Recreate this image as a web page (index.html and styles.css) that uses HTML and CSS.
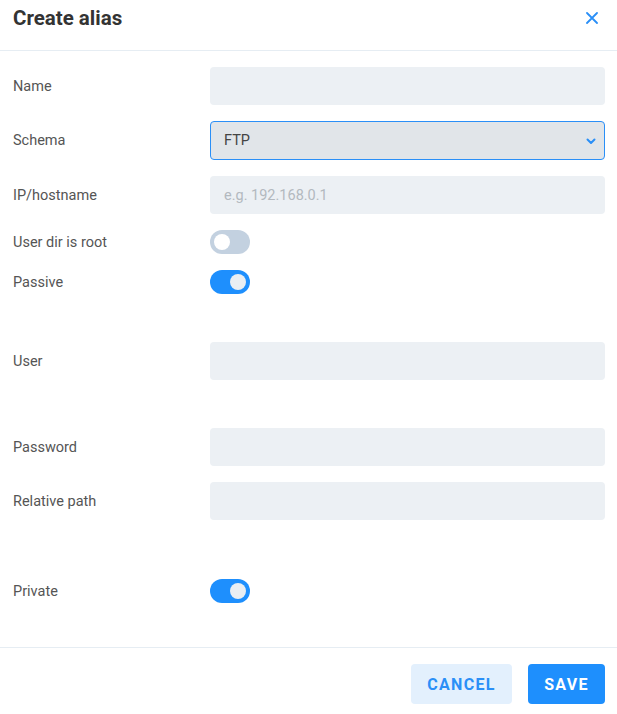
FILE: index.html
```html
<!DOCTYPE html>
<html lang="en">
<head>
  <meta charset="UTF-8">
  <meta name="viewport" content="width=device-width, initial-scale=1.0">
  <title>Create alias</title>
  <link rel="stylesheet" href="styles.css">
</head>
<body>
  <div class="dialog">
    <header class="dialog-head">
      <h1>Create alias</h1>
      <button class="close" aria-label="Close">
        <svg width="12" height="12" viewBox="0 0 12 12"><path d="M1 1L11 11M11 1L1 11" stroke="#2a8ff7" stroke-width="1.8" stroke-linecap="round"/></svg>
      </button>
    </header>

    <div class="dialog-body">
      <div class="row">
        <label>Name</label>
        <input class="field" type="text">
      </div>
      <div class="row">
        <label>Schema</label>
        <div class="select">
          <span>FTP</span>
          <svg width="10" height="7" viewBox="0 0 10 7"><path d="M1.5 1.5L5 5L8.5 1.5" fill="none" stroke="#2a8ff7" stroke-width="2" stroke-linecap="round" stroke-linejoin="round"/></svg>
        </div>
      </div>
      <div class="row">
        <label>IP/hostname</label>
        <input class="field" type="text" placeholder="e.g. 192.168.0.1">
      </div>
      <div class="row">
        <label>User dir is root</label>
        <span class="toggle"></span>
      </div>
      <div class="row">
        <label>Passive</label>
        <span class="toggle on"></span>
      </div>
      <div class="row spaced">
        <label>User</label>
        <input class="field" type="text">
      </div>
      <div class="row spaced">
        <label>Password</label>
        <input class="field" type="password">
      </div>
      <div class="row">
        <label>Relative path</label>
        <input class="field" type="text">
      </div>
      <div class="row last">
        <label>Private</label>
        <span class="toggle on"></span>
      </div>
    </div>

    <footer class="dialog-foot">
      <button class="btn cancel">Cancel</button>
      <button class="btn save">Save</button>
    </footer>
  </div>
</body>
</html>
```

FILE: styles.css
```css
body { margin: 0; font-family: Roboto, 'Liberation Sans', Arial, sans-serif; background: #fff; color: #444; }
.dialog { width: 617px; }
.dialog-head { display: flex; justify-content: space-between; align-items: flex-start; height: 51px; padding: 4px 13px 0; box-sizing: border-box; border-bottom: 1px solid #e6edf3; }
.dialog-head h1 { margin: 0; font-size: 20.5px; line-height: 28px; font-weight: 700; color: #333; }
.close { background: none; border: none; padding: 0; margin-top: 8px; margin-right: 6px; width: 12px; height: 12px; cursor: pointer; display: flex; }
.dialog-body { display: flex; flex-direction: column; gap: 16px; padding: 16px 12px 44px 13px; }
.row { display: flex; align-items: center; }
.row.spaced { margin-top: 32px; }
.row.last { margin-top: 43px; }
.row label { width: 197px; flex: none; font-size: 14.5px; color: #555; }
.field { flex: 1; height: 38px; box-sizing: border-box; border: none; border-radius: 4px; background: #ecf0f4; padding: 0 14px; font: 14.5px Roboto, 'Liberation Sans', Arial, sans-serif; color: #444; outline: none; }
.field::placeholder { color: #b3b9bf; }
.select { flex: 1; height: 39px; box-sizing: border-box; border: 1px solid #2a8ff7; border-radius: 4px; background: #e1e5e9; padding: 0 8px 0 13px; display: flex; align-items: center; justify-content: space-between; font-size: 14.5px; color: #444; }
.select svg { margin-top: 1px; }
.toggle { position: relative; width: 40px; height: 24px; border-radius: 12px; background: #c3d1e0; }
.toggle::after { content: ""; position: absolute; top: 4px; left: 4px; width: 16px; height: 16px; border-radius: 50%; background: #fff; }
.toggle.on { background: #1e8ffd; }
.toggle.on::after { left: 20px; background: #e9eef3; }
.dialog-foot { display: flex; justify-content: flex-end; gap: 16px; padding: 16px 12px 10px; border-top: 1px solid #e6edf3; }
.btn { height: 40px; border: none; border-radius: 4px; font: 700 16px Roboto, 'Liberation Sans', Arial, sans-serif; letter-spacing: 1.3px; text-transform: uppercase; cursor: pointer; }
.cancel { width: 101px; background: #e3f0fd; color: #2a8ff7; }
.save { width: 77px; background: #1e8ffd; color: #fff; }
```
